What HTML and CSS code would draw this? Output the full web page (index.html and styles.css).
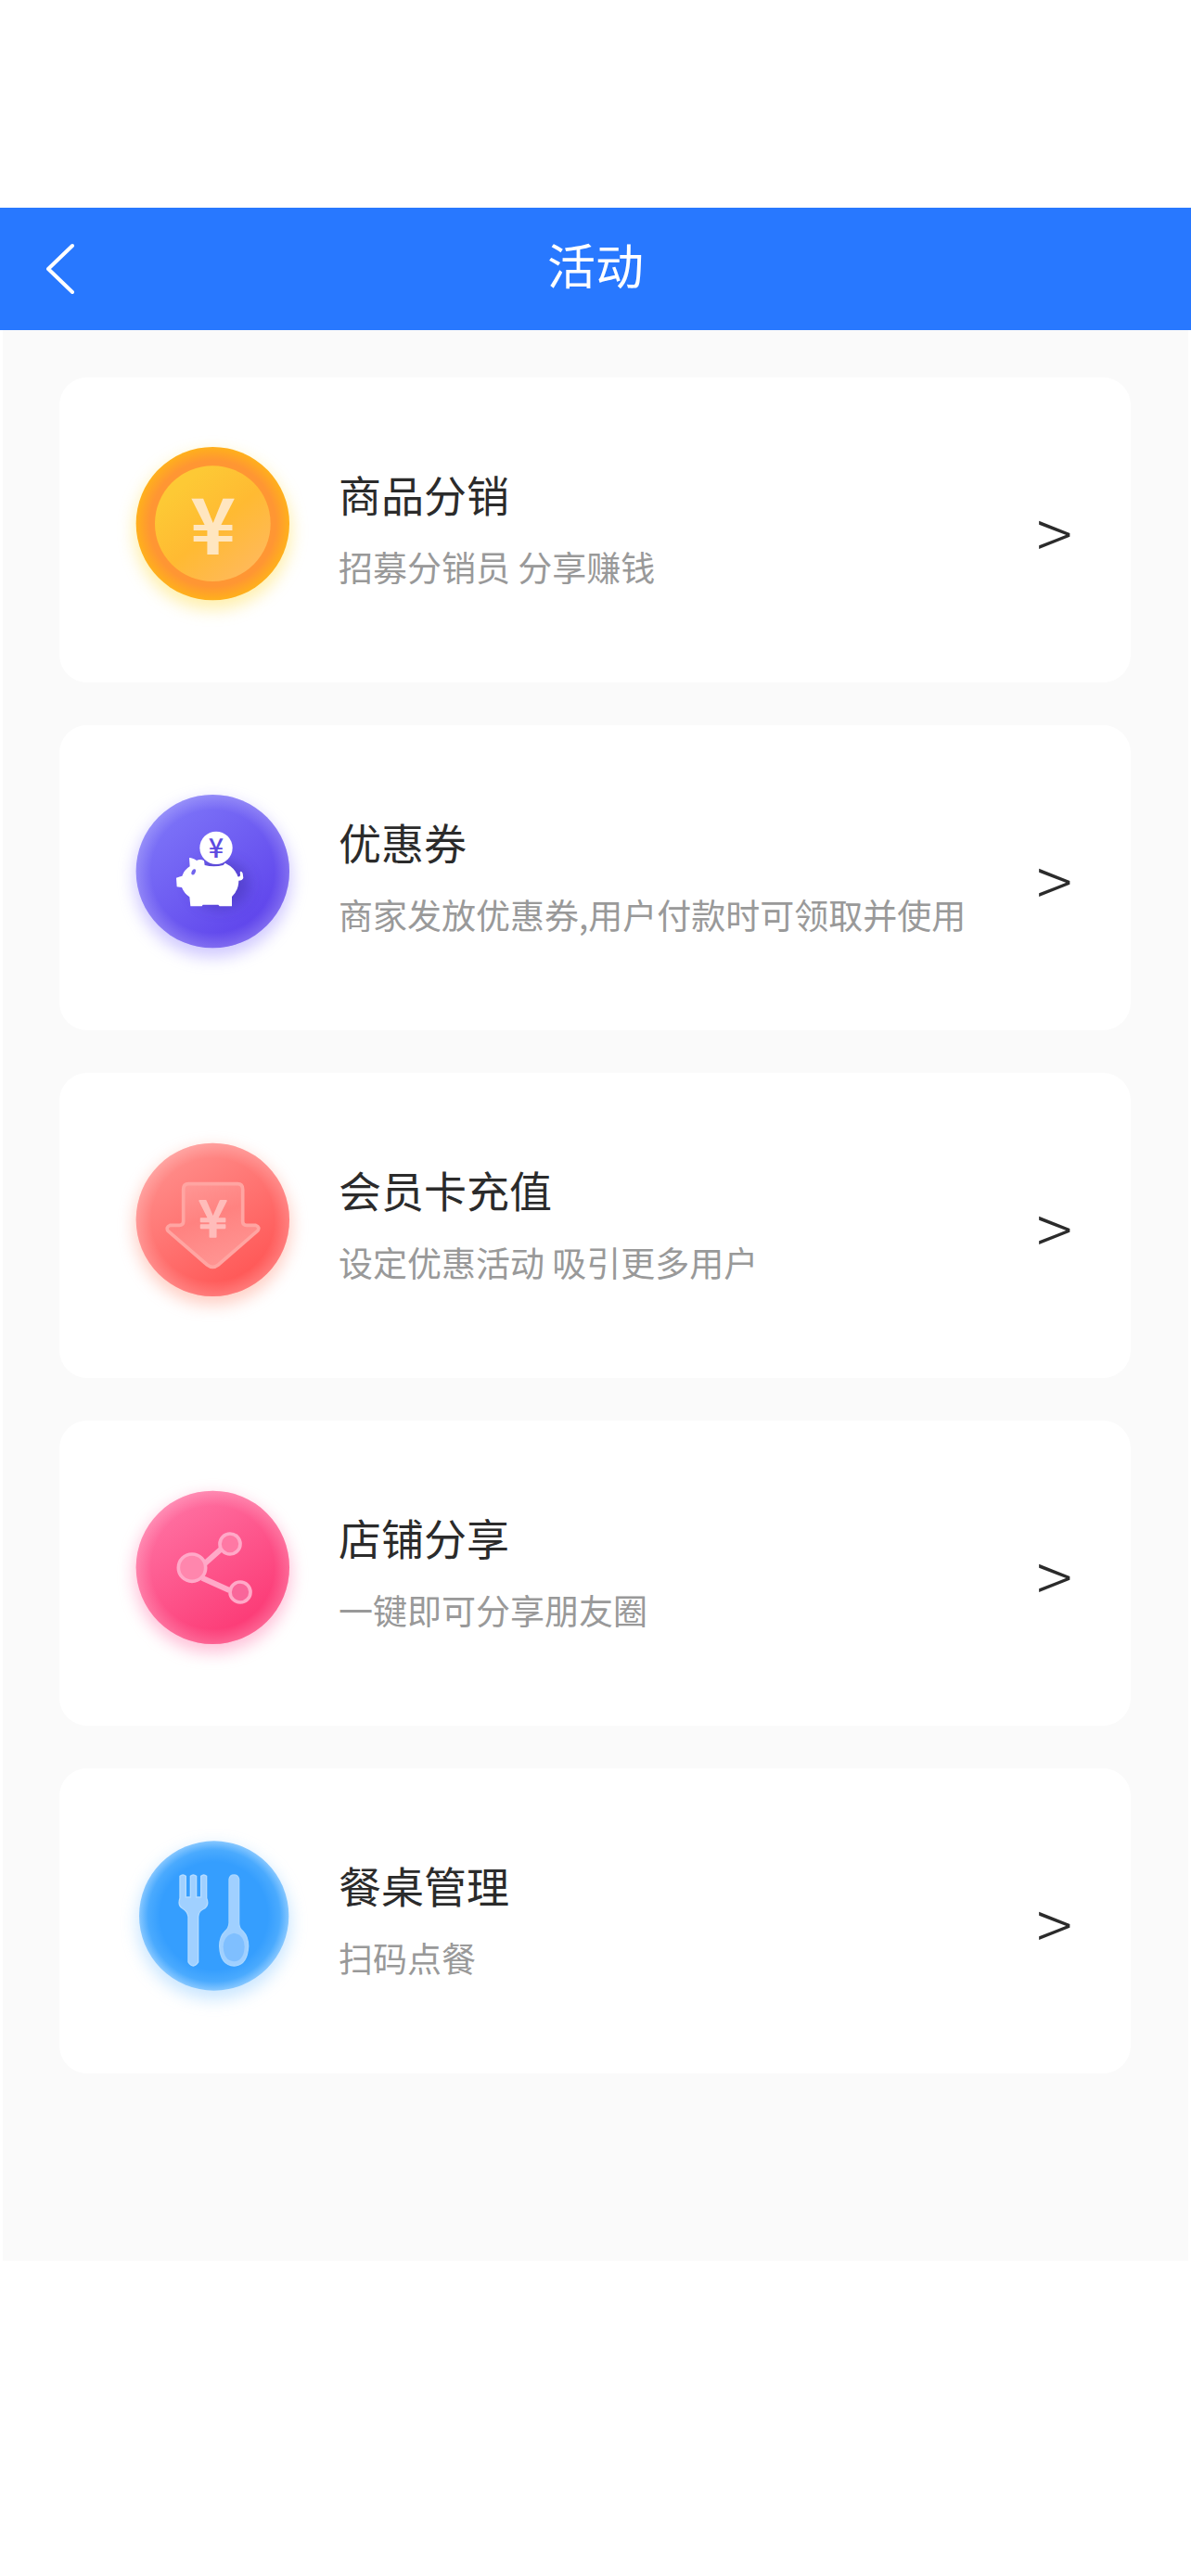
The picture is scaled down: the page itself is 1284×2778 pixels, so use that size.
FILE: index.html
```html
<!DOCTYPE html>
<html lang="zh-CN">
  <head>
    <meta charset="UTF-8" />
    <title>活动</title>
    <meta name="viewport" content="width=device-width, initial-scale=1.0" />
    <link rel="stylesheet" href="styles.css">
  </head>
  <body>
    <header class="navbar">
      <button class="back" type="button" aria-label="返回">
        <svg viewBox="0 0 30 56" width="30" height="56">
          <path d="M28 3 L2 28 L28 53" />
        </svg>
      </button>
      <h1>活动</h1>
    </header>

    <main class="list">
      <a class="card" href="#">
        <svg class="icon" viewBox="0 0 660 660">
          <defs>
            <radialGradient id="coinRim">
              <stop offset="0.82" stop-color="#ff9633" />
              <stop offset="1" stop-color="#ffb01c" />
            </radialGradient>
            <linearGradient id="coinFace" x1="0.2" y1="0.2" x2="0.8" y2="0.9">
              <stop offset="0" stop-color="#fdc935" />
              <stop offset="0.5" stop-color="#ffba32" />
              <stop offset="1" stop-color="#ffb957" />
            </linearGradient>
            <filter id="glow" x="-20%" y="-20%" width="140%" height="140%">
              <feGaussianBlur stdDeviation="26" />
            </filter>
          </defs>
          <circle class="glow" cx="328" cy="332" r="254" fill="#ffe36a" />
          <circle cx="328" cy="308" r="248" fill="url(#coinRim)" />
          <circle cx="328" cy="308" r="187" fill="url(#coinFace)" />
          <text class="yen yen-coin" x="329" y="408">¥</text>
        </svg>
        <div class="info">
          <h2>商品分销</h2>
          <p>招募分销员 分享赚钱</p>
        </div>
        <span class="arrow">&gt;</span>
      </a>

      <a class="card" href="#">
        <svg class="icon" viewBox="0 0 660 660">
          <defs>
            <linearGradient id="violet" x1="0.15" y1="0.15" x2="0.75" y2="0.85">
              <stop offset="0" stop-color="#7d74f8" />
              <stop offset="1" stop-color="#6046ec" />
            </linearGradient>
            <radialGradient id="edge">
              <stop offset="0.8" stop-color="#fff" stop-opacity="0" />
              <stop offset="1" stop-color="#fff" stop-opacity="0.2" />
            </radialGradient>
            <filter id="pigShadow" x="-40%" y="-40%" width="200%" height="200%">
              <feGaussianBlur stdDeviation="20" />
            </filter>
          </defs>
          <circle class="glow" cx="328" cy="332" r="254" fill="#a99cff" />
          <circle cx="328" cy="308" r="248" fill="url(#violet)" />
          <circle cx="328" cy="308" r="248" fill="url(#edge)" />
          <ellipse cx="350" cy="350" rx="95" ry="80" fill="#4330b0" opacity="0.5" filter="url(#pigShadow)" />
          <path d="M252 265 Q256 262 276 273 Q288 266 300 274 L302 288 Q332 296 362 288 L368 281 Q402 298 409 325 Q420 328 416 312 Q419 304 425 314 L427 329 Q424 338 412 338 Q412 368 390 390 L390 421 L350 421 L346 416 L296 416 L293 421 L256 421 L253 391 Q236 380 228 360 L212 358 L210 329 Q222 324 229 323 Q236 303 254 292 Z" fill="#fff" />
          <ellipse cx="266" cy="310" rx="6" ry="10" transform="rotate(25 266 310)" fill="#7164ee" />
          <circle cx="339" cy="232" r="53" fill="#fff" />
          <text class="yen yen-pig" x="339" y="264">¥</text>
        </svg>
        <div class="info">
          <h2>优惠券</h2>
          <p>商家发放优惠券,用户付款时可领取并使用</p>
        </div>
        <span class="arrow">&gt;</span>
      </a>

      <a class="card" href="#">
        <svg class="icon" viewBox="0 0 660 660">
          <defs>
            <linearGradient id="coral" x1="0.2" y1="0.1" x2="0.7" y2="0.85">
              <stop offset="0" stop-color="#ff8e8b" />
              <stop offset="1" stop-color="#ff5a59" />
            </linearGradient>
            <linearGradient id="coralArrow" x1="0" y1="0" x2="0.4" y2="1">
              <stop offset="0" stop-color="#ff9a98" />
              <stop offset="0.5" stop-color="#ff8280" />
              <stop offset="1" stop-color="#ff9391" />
            </linearGradient>
          </defs>
          <circle class="glow" cx="328" cy="332" r="254" fill="#ffa794" />
          <circle cx="328" cy="310" r="248" fill="url(#coral)" />
          <circle cx="328" cy="310" r="248" fill="url(#edge)" />
          <path d="M250 194 H408 Q425 194 425 212 V316 Q425 328 437 328 L467 328 Q482 334 473 346 L346 456 Q328 470 310 456 L183 346 Q176 334 190 328 L220 328 Q233 328 233 316 V212 Q233 194 250 194 Z" fill="url(#coralArrow)" stroke="#ffa5a2" stroke-width="11" />
          <text class="yen yen-arrow" x="329" y="366">¥</text>
        </svg>
        <div class="info">
          <h2>会员卡充值</h2>
          <p>设定优惠活动 吸引更多用户</p>
        </div>
        <span class="arrow">&gt;</span>
      </a>

      <a class="card" href="#">
        <svg class="icon" viewBox="0 0 660 660">
          <defs>
            <linearGradient id="pink" x1="0.2" y1="0.1" x2="0.7" y2="0.85">
              <stop offset="0" stop-color="#ff71a2" />
              <stop offset="1" stop-color="#fc3d78" />
            </linearGradient>
          </defs>
          <circle class="glow" cx="328" cy="332" r="254" fill="#ff8fba" />
          <circle cx="328" cy="310" r="248" fill="url(#pink)" />
          <circle cx="328" cy="310" r="248" fill="url(#edge)" />
          <path d="M302 298 L356 250 M294 344 L382 384" stroke="#ffa9c8" stroke-width="18" />
          <circle cx="261" cy="311" r="44" fill="#ff86ad" stroke="#ffa9c8" stroke-width="11" />
          <circle cx="384" cy="234" r="33" fill="#ff78a4" stroke="#ffa9c8" stroke-width="11" />
          <circle cx="417" cy="390" r="33" fill="#f9669a" stroke="#ffa9c8" stroke-width="11" />
        </svg>
        <div class="info">
          <h2>店铺分享</h2>
          <p>一键即可分享朋友圈</p>
        </div>
        <span class="arrow">&gt;</span>
      </a>

      <a class="card" href="#">
        <svg class="icon" viewBox="0 0 660 660">
          <defs>
            <radialGradient id="blue">
              <stop offset="0.72" stop-color="#359efe" />
              <stop offset="0.88" stop-color="#4aaafe" />
              <stop offset="1" stop-color="#86c7ff" />
            </radialGradient>
          </defs>
          <circle class="glow" cx="332" cy="334" r="248" fill="#9ed2ff" />
          <circle cx="332" cy="312" r="242" fill="url(#blue)" />
          <path d="M222 184 Q232 176 241 184 V252 H256 V184 Q265 176 275 184 V252 H290 V184 Q299 176 308 184 V255 Q317 275 302 288 Q282 296 281 315 V462 Q265 486 249 462 V315 Q247 298 230 288 Q214 278 222 255 Z" fill="#a0d0ff" stroke="#b5dcff" stroke-width="4" />
          <path d="M381 194 Q383 180 397 180 Q411 180 413 194 V335 Q413 352 426 362 Q443 380 443 410 Q440 472 397 474 Q353 472 350 410 Q350 380 368 362 Q380 352 381 335 Z" fill="#a0d0ff" stroke="#a8d6ff" stroke-width="4" />
          <path d="M397 368 Q430 374 431 412 Q429 458 397 460 Q364 458 362 412 Q364 374 397 368 Z" fill="#7fbfff" />
        </svg>
        <div class="info">
          <h2>餐桌管理</h2>
          <p>扫码点餐</p>
        </div>
        <span class="arrow">&gt;</span>
      </a>
    </main>
  </body>
</html>
```

FILE: styles.css
```css
body {
  font-family: "Noto Sans CJK SC", sans-serif;
  background-color: #fff;
  margin: 0;
  padding: 224px 0 0;
}

.navbar {
  display: grid;
  grid-template-columns: 130px 1fr 130px;
  align-items: center;
  height: 132px;
  background-color: #2878ff;
  color: #fff;
}

.back {
  display: flex;
  align-items: center;
  height: 100%;
  padding: 0 0 0 50px;
  border: none;
  background: none;
  cursor: pointer;
}

.back path {
  fill: none;
  stroke: #fff;
  stroke-width: 4;
  stroke-linecap: round;
  stroke-linejoin: round;
}

.navbar h1 {
  margin: 0;
  padding-bottom: 10px;
  font-size: 52px;
  line-height: 72px;
  font-weight: 400;
  text-align: center;
}

.list {
  display: flex;
  flex-direction: column;
  gap: 46px;
  margin: 0 3px;
  padding: 51px 62px 202px 61px;
  background-color: #fafafa;
}

.card {
  display: flex;
  align-items: center;
  box-sizing: border-box;
  min-height: 329px;
  padding: 0 63px 0 56px;
  border-radius: 30px;
  background-color: #fff;
  color: #2b2b2b;
  text-decoration: none;
}

.icon {
  flex: none;
  width: 220px;
  height: 220px;
}

.glow {
  opacity: 0.55;
  filter: url(#glow);
}

.yen {
  font-weight: 700;
  text-anchor: middle;
}

.yen-coin {
  font-size: 250px;
  fill: #ffe6c0;
}

.yen-pig {
  font-size: 86px;
  font-weight: 500;
  fill: #5d4ae0;
}

.yen-arrow {
  font-size: 164px;
  font-weight: 500;
  fill: #ffbcba;
  stroke: #ffbcba;
  stroke-width: 5;
  stroke-linejoin: round;
}

.info {
  flex: 1;
  margin-left: 25px;
  padding-bottom: 8px;
}

.info h2 {
  margin: 0 0 18px;
  font-size: 46px;
  line-height: 68px;
  font-weight: 400;
}

.info p {
  margin: 0;
  font-size: 37px;
  line-height: 54px;
  color: #999;
}

.arrow {
  font-size: 72px;
  line-height: 80px;
  font-weight: 300;
}
```
